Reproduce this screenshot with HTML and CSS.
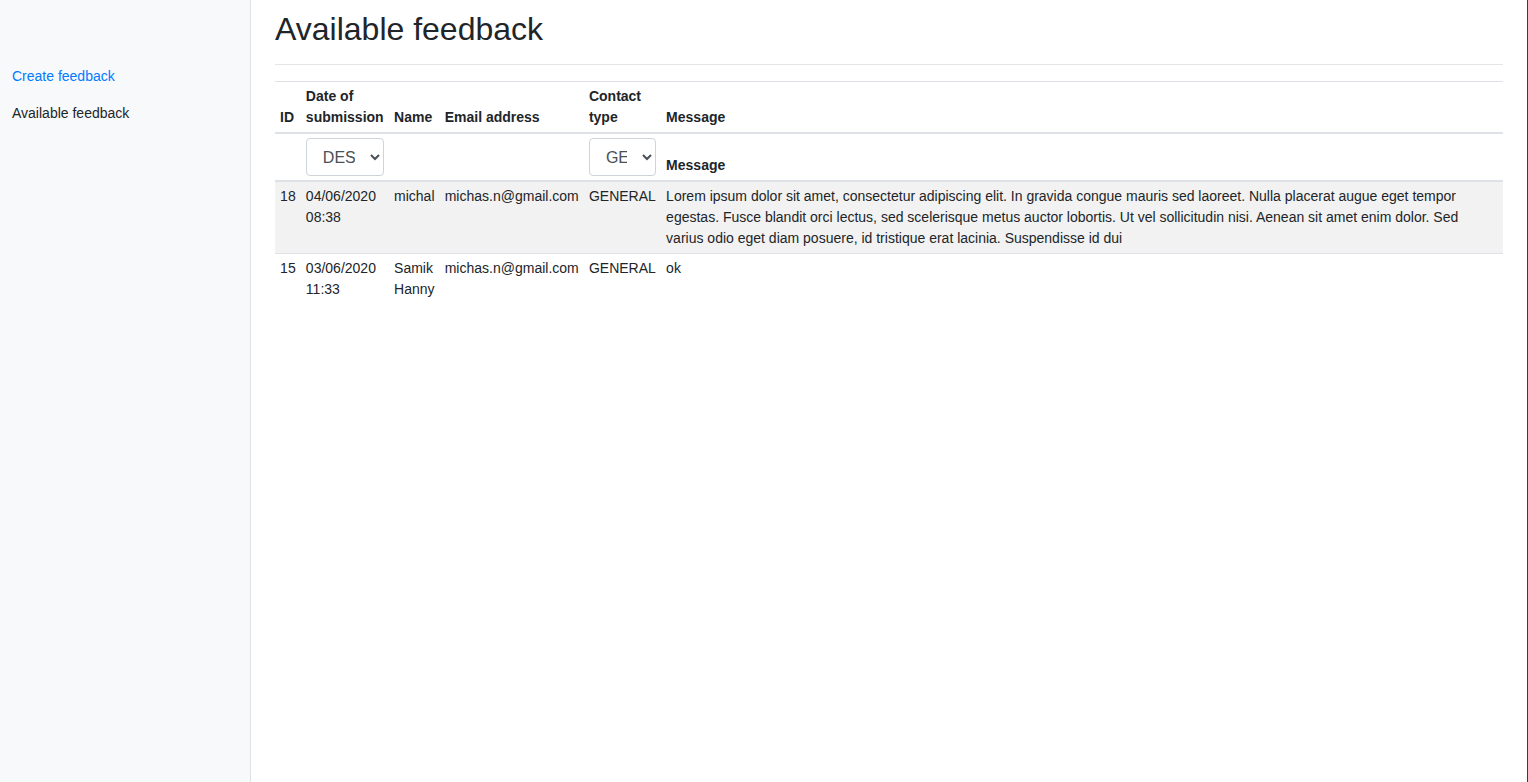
FILE: index.html
```html
<!DOCTYPE html>
<html lang="en">
<head>
<meta charset="utf-8">
<title>Available feedback</title>
<link rel="stylesheet" href="styles.css">
</head>
<body>
<div class="app">
  <nav class="sidebar">
    <ul class="nav">
      <li><a class="nav-link active" href="#">Create feedback</a></li>
      <li><a class="nav-link" href="#">Available feedback</a></li>
    </ul>
  </nav>
  <main class="main">
    <h2 class="title">Available feedback</h2>
    <hr class="divider">
    <table class="table">
      <thead>
        <tr>
          <th class="fit">ID</th>
          <th class="fit">Date of submission</th>
          <th class="fit">Name</th>
          <th class="fit">Email address</th>
          <th class="fit">Contact type</th>
          <th>Message</th>
        </tr>
        <tr>
          <th></th>
          <th>
            <select class="form-select sel-date">
              <option>DESC</option>
              <option>ASC</option>
            </select>
          </th>
          <th></th>
          <th></th>
          <th>
            <select class="form-select sel-type">
              <option>GENERAL</option>
              <option>OTHER</option>
            </select>
          </th>
          <th>Message</th>
        </tr>
      </thead>
      <tbody>
        <tr class="striped">
          <td>18</td>
          <td>04/06/2020 08:38</td>
          <td>michal</td>
          <td>michas.n@gmail.com</td>
          <td>GENERAL</td>
          <td>Lorem ipsum dolor sit amet, consectetur adipiscing elit. In gravida congue mauris sed laoreet. Nulla placerat augue eget tempor egestas. Fusce blandit orci lectus, sed scelerisque metus auctor lobortis. Ut vel sollicitudin nisi. Aenean sit amet enim dolor. Sed varius odio eget diam posuere, id tristique erat lacinia. Suspendisse id dui</td>
        </tr>
        <tr>
          <td>15</td>
          <td>03/06/2020 11:33</td>
          <td>Samik Hanny</td>
          <td>michas.n@gmail.com</td>
          <td>GENERAL</td>
          <td>ok</td>
        </tr>
      </tbody>
    </table>
  </main>
</div>
</body>
</html>
```

FILE: styles.css
```css
html, body {
  margin: 0;
  padding: 0;
  height: 100%;
}
body {
  font-family: "Liberation Sans", Arial, sans-serif;
  font-size: 14px;
  line-height: 1.5;
  color: #212529;
  background: #fff;
}
.app {
  display: flex;
  min-height: 100vh;
  border-right: 1px solid #3a3a3a;
  box-sizing: border-box;
}
.sidebar {
  width: 250px;
  flex: 0 0 250px;
  background: #f8f9fa;
  border-right: 1px solid #dee2e6;
  padding-top: 58px;
}
.nav {
  list-style: none;
  margin: 0;
  padding: 0;
}
.nav-link {
  display: block;
  padding: 8px 12px;
  color: #212529;
  text-decoration: none;
}
.nav-link.active {
  color: #007bff;
}
.main {
  flex: 1;
  min-width: 0;
  padding: 10px 24px 0;
}
.title {
  margin: 0;
  font-size: 32px;
  font-weight: 500;
  line-height: 1.2;
}
.divider {
  margin: 16px 0 16px;
  border: 0;
  border-top: 1px solid rgba(0, 0, 0, 0.1);
}
.table {
  width: 100%;
  border-collapse: collapse;
}
.table th,
.table td {
  padding: 4px 5.1px;
  text-align: left;
  vertical-align: top;
  border-top: 1px solid #dee2e6;
}
.table thead th {
  vertical-align: bottom;
  border-bottom: 2px solid #dee2e6;
  font-weight: 700;
}
.table .fit {
  width: 1%;
}
.striped td {
  background: #f2f2f2;
}
.form-select {
  display: block;
  height: 38px;
  padding: 6px 12px;
  font-family: "Liberation Sans", Arial, sans-serif;
  font-size: 16px;
  color: #495057;
  background: #fff;
  border: 1px solid #ced4da;
  border-radius: 4px;
  box-sizing: border-box;
}
.sel-date {
  width: 78px;
}
.sel-type {
  width: 67px;
}
```
